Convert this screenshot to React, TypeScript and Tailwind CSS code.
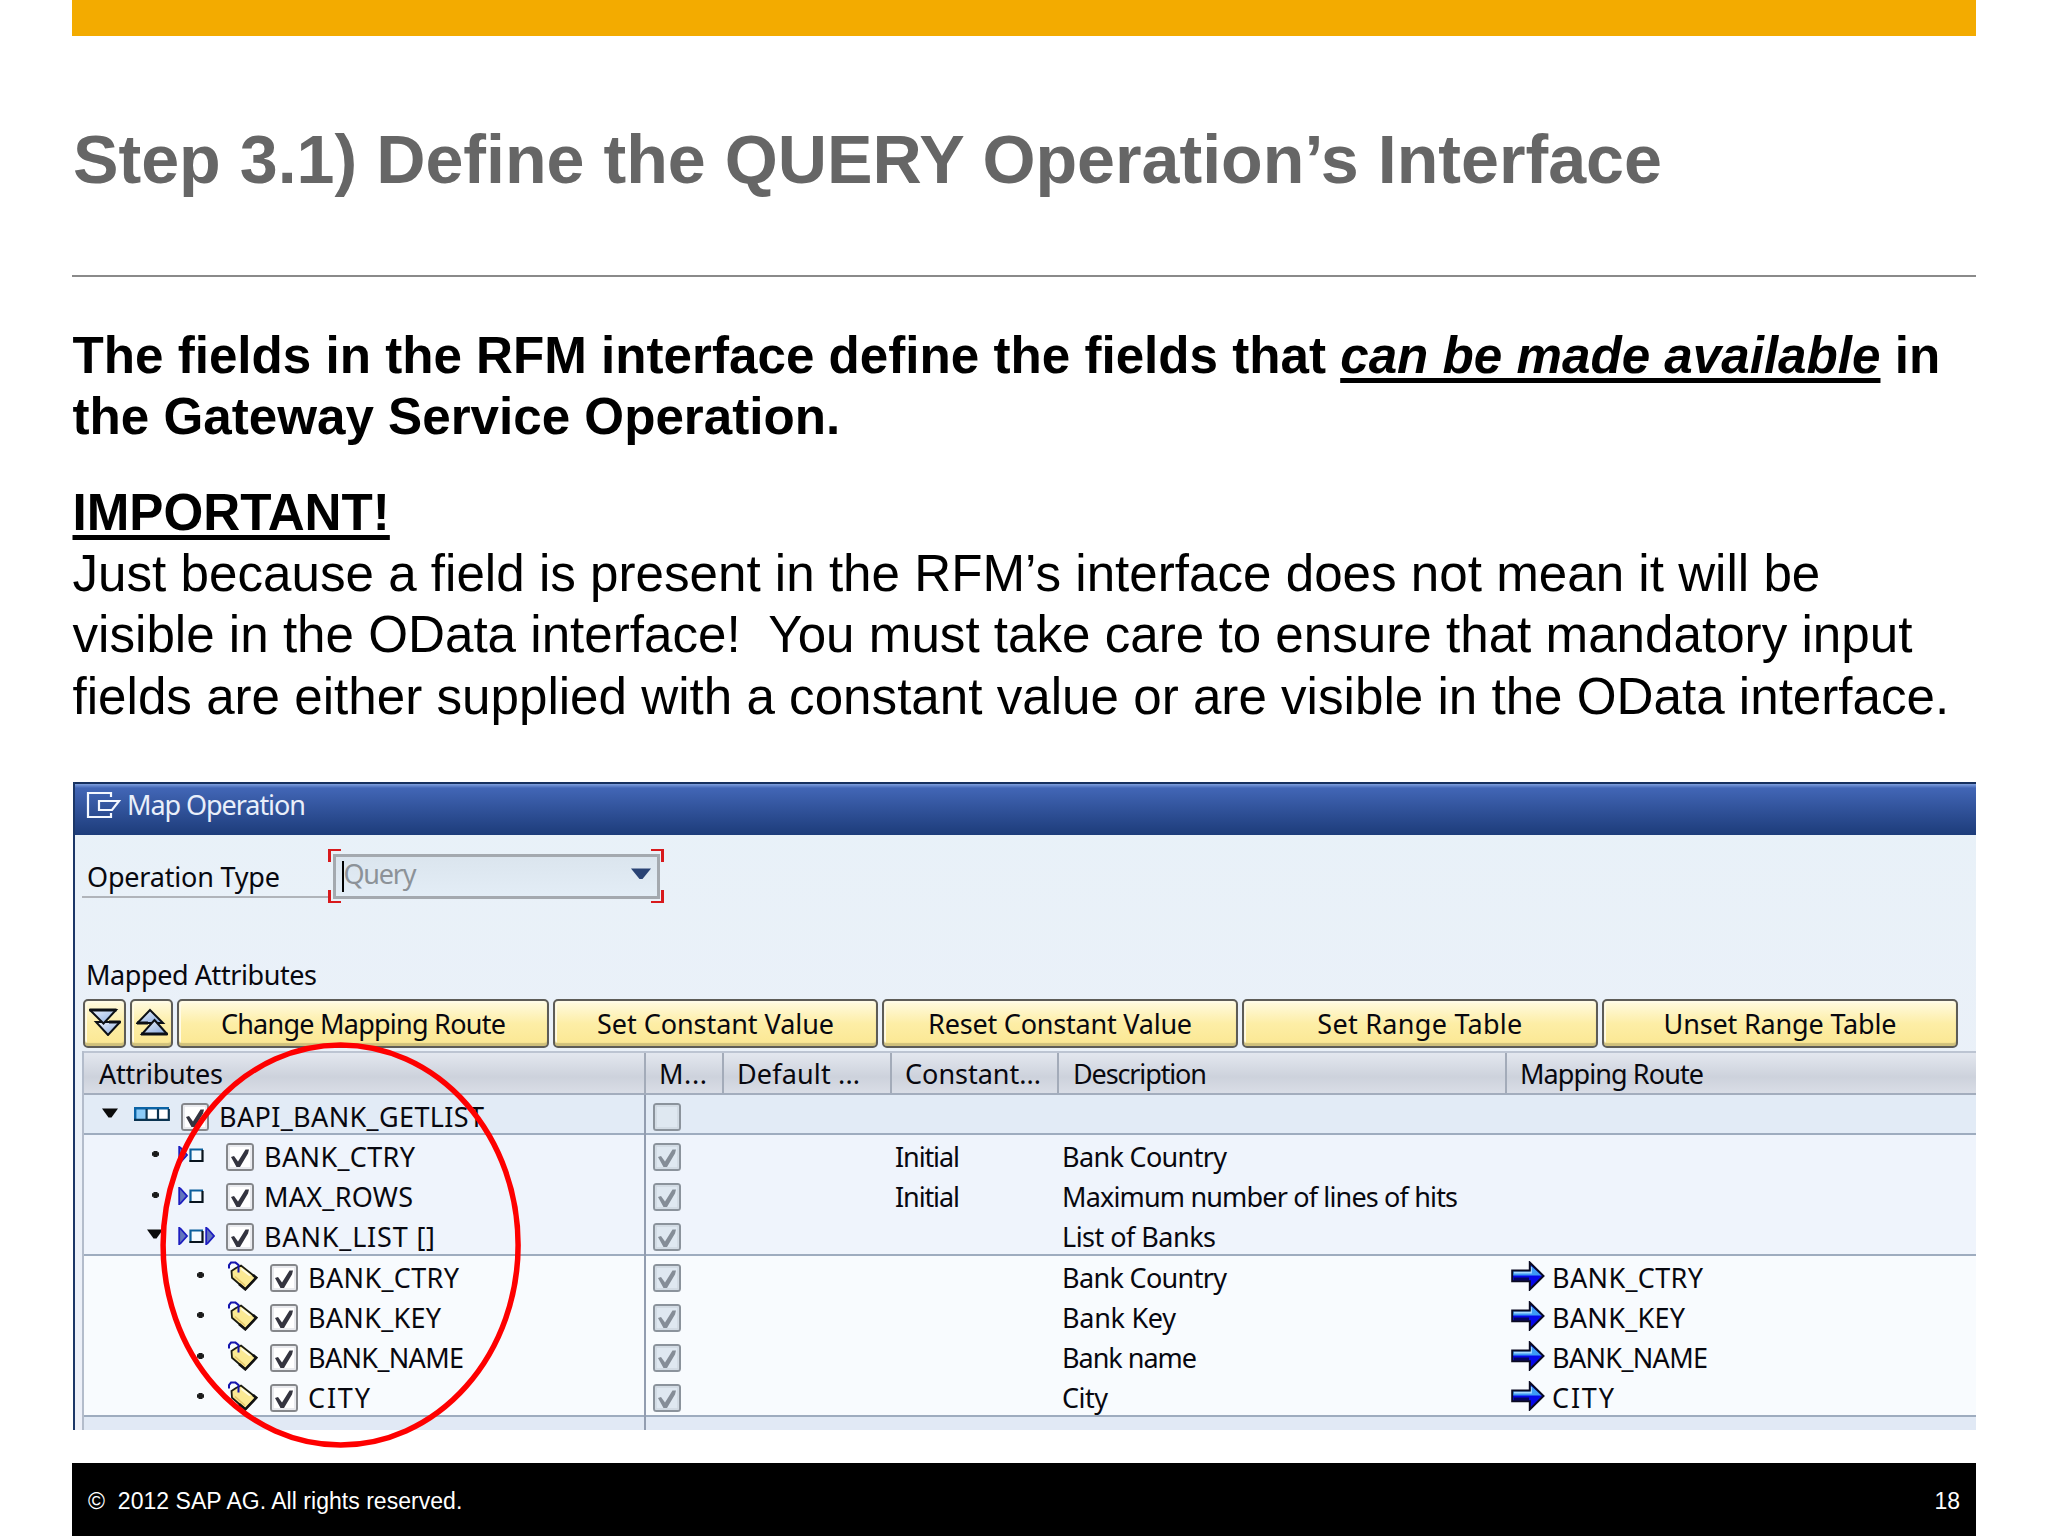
import { useLayoutEffect, useRef, useState } from "react";
import type { ReactNode } from "react";

type NodeKind = "structure" | "input" | "inout" | "field";

type Row = {
  level: 0 | 1 | 2;
  kind: NodeKind;
  open?: boolean;
  name: string;
  nameWidth: number;
  mapped: boolean;
  constant?: string;
  description?: string;
  descriptionWidth?: number;
  route?: boolean;
};

const rows: Row[] = [
  { level: 0, kind: "structure", open: true, name: "BAPI_BANK_GETLIST", nameWidth: 263, mapped: false },
  { level: 1, kind: "input", name: "BANK_CTRY", nameWidth: 149, mapped: true, constant: "Initial", description: "Bank Country", descriptionWidth: 163 },
  { level: 1, kind: "input", name: "MAX_ROWS", nameWidth: 147, mapped: true, constant: "Initial", description: "Maximum number of lines of hits", descriptionWidth: 394 },
  { level: 1, kind: "inout", open: true, name: "BANK_LIST []", nameWidth: 169, mapped: true, description: "List of Banks", descriptionWidth: 152 },
  { level: 2, kind: "field", name: "BANK_CTRY", nameWidth: 149, mapped: true, description: "Bank Country", descriptionWidth: 163, route: true },
  { level: 2, kind: "field", name: "BANK_KEY", nameWidth: 131, mapped: true, description: "Bank Key", descriptionWidth: 112, route: true },
  { level: 2, kind: "field", name: "BANK_NAME", nameWidth: 154, mapped: true, description: "Bank name", descriptionWidth: 133, route: true },
  { level: 2, kind: "field", name: "CITY", nameWidth: 60, mapped: true, description: "City", descriptionWidth: 44, route: true },
];

const buttons = [
  { label: "Change Mapping Route", textWidth: 283, className: "w-[372px]" },
  { label: "Set Constant Value", textWidth: 235, className: "w-[325px]" },
  { label: "Reset Constant Value", textWidth: 262, className: "w-[356px]" },
  { label: "Set Range Table", textWidth: 203, className: "w-[356px]" },
  { label: "Unset Range Table", textWidth: 231, className: "w-[356px]" },
];

const headers = [
  { label: "Attributes", textWidth: 122, className: "pl-[15px]" },
  { label: "M...", textWidth: 46, className: "border-l-2 pl-[13px]" },
  { label: "Default ...", textWidth: 121, className: "border-l-2 pl-[13px]" },
  { label: "Constant...", textWidth: 134, className: "border-l-2 pl-[13px]" },
  { label: "Description", textWidth: 132, className: "border-l-2 pl-[14px]" },
  { label: "Mapping Route", textWidth: 182, className: "border-l-2 pl-[13px]" },
];

const GRID = "grid grid-cols-[560px_78px_168px_167px_448px_471px]";

// Glyph side bearings, left and right of the ink
const BEARING = 2;

// Spreads the letters so that the label's ink fills the given width
function FitText({
  text,
  width,
  className = "",
}: {
  text: string;
  width: number;
  className?: string;
}) {
  const ref = useRef<HTMLSpanElement | null>(null);
  const [spacing, setSpacing] = useState(0);

  useLayoutEffect(() => {
    const node = ref.current;
    if (!node) return;
    node.style.letterSpacing = "0px";
    const natural = node.getBoundingClientRect().width;
    const next = (width + BEARING - natural) / (text.length - 1);
    node.style.letterSpacing = `${next}px`;
    setSpacing(next);
  }, [text, width]);

  return (
    <span
      ref={ref}
      className={`inline-block whitespace-pre ${className}`}
      style={{ letterSpacing: `${spacing}px` }}
    >
      {text}
    </span>
  );
}

function Checkbox({ checked, disabled }: { checked: boolean; disabled?: boolean }) {
  return (
    <svg viewBox="0 0 28 28" className="size-7 shrink-0">
      <rect
        x="1"
        y="1"
        width="26"
        height="26"
        rx="2.5"
        fill={disabled ? "#dfe8f1" : "#ffffff"}
        stroke={disabled ? "#8b939c" : "#85878b"}
        strokeWidth="2"
      />
      <rect x="3" y="3" width="22" height="22" fill="none" stroke={disabled ? "#cfd8e1" : "#e3e5ea"} strokeWidth="1.5" />
      {checked && (
        <path
          d="M5 14 L8 13 L12 18.5 L19.5 6.5 L23 6.5 L22 10.5 L14 24 L10.5 24 Z"
          fill={disabled ? "#858d97" : "#34343f"}
        />
      )}
    </svg>
  );
}

function NodeIcon({ kind }: { kind: NodeKind }) {
  if (kind === "structure") {
    return (
      <svg viewBox="0 0 36 14" className="mr-[11px] mb-[6px] ml-4 h-3.5 w-9 shrink-0">
        <rect x="1.2" y="1.2" width="11.6" height="11.6" fill="#8ccbf7" />
        <rect x="12.5" y="1.2" width="22" height="11.6" fill="#fff" />
        <path d="M1.2 13 V1.2 H35" fill="none" stroke="#0b63a5" strokeWidth="2.4" />
        <path d="M0 12.8 H34.8 V2 M12.6 2 V12 M24 2 V12" fill="none" stroke="#0a3350" strokeWidth="2.2" />
      </svg>
    );
  }
  if (kind === "field") {
    return (
      <svg viewBox="0 0 30 30" className="mr-3 mb-1 ml-5 size-[30px] shrink-0">
        <path d="M3.5 10 L8 7 L13 4.5 L28.3 16.7 L17.3 28.3 L4 16.7 Z" fill="#fbe993" stroke="#1a1a10" strokeWidth="1.8" />
        <path d="M13 7.5 L22 14.5" fill="none" stroke="#fffbe0" strokeWidth="2" />
        <path d="M7 15.5 L17 24.5" fill="none" stroke="#e6c66c" strokeWidth="1.6" />
        <path d="M11 23 L17.3 28.3 L28.3 16.7 L25 14" fill="none" stroke="#111" strokeWidth="2.6" />
        <path d="M1 7.5 V4 L3 1.6 H7.5 L10.5 4 V11.5" fill="none" stroke="#1414ae" strokeWidth="2" />
      </svg>
    );
  }
  return (
    <svg viewBox="0 0 37 20" className="mr-[11px] mb-[3px] ml-[15px] h-5 w-[37px] shrink-0">
      <path d="M1 1 L9.5 10 L1 19 Z" fill="#6375bd" />
      <path d="M1.2 1 V19 M2 2 L9 10 L2 18" fill="none" stroke="#1d1dc0" strokeWidth="1.8" />
      <rect x="12.5" y="4.5" width="12" height="11.5" fill="#f4faff" />
      <path d="M12.5 17 V4.5 H25" fill="none" stroke="#0b5f9c" strokeWidth="2.2" />
      <path d="M11.5 16 H24.5 V5" fill="none" stroke="#08131d" strokeWidth="2.2" />
      {kind === "inout" && (
        <>
          <path d="M28 1 L36.5 10 L28 19 Z" fill="#6375bd" />
          <path d="M28.2 1 V19 M29 2 L36 10 L29 18" fill="none" stroke="#1d1dc0" strokeWidth="1.8" />
        </>
      )}
    </svg>
  );
}

function Marker({ open }: { open?: boolean }) {
  return (
    <svg viewBox="0 0 16 16" className="mb-[5px] size-4 shrink-0">
      {open ? (
        <path d="M0 2.5 H16 L9.5 11.5 H6.5 Z" fill="#0b0b0b" />
      ) : (
        <path d="M6.5 5 H10.5 V6.3 H12 V9.7 H10.5 V11 H6.5 V9.7 H5 V6.3 H6.5 Z" fill="#1b1b1b" />
      )}
    </svg>
  );
}

function RouteArrow() {
  return (
    <svg viewBox="0 0 34 30" className="mb-1 h-[30px] w-[34px] shrink-0">
      <path d="M1.5 9.5 H18.5 V2 L32 15 L18.5 28 V20 H1.5 Z" fill="#0606e8" />
      <path d="M2 10 H19 V4 L31 14.5 H2 Z" fill="#3d9af5" />
      <path d="M3 11.5 H20 V6" fill="none" stroke="#a6d8ff" strokeWidth="1.8" />
      <path d="M3 18 H18" stroke="#050560" strokeWidth="3" />
      <path d="M1.2 9.5 H18.8 V1.5 L32.5 15 L18.8 28.5 V20.2 H1.2 Z" fill="none" stroke="#0a0a22" strokeWidth="2" />
    </svg>
  );
}

function ToolButton({ children, className }: { children: ReactNode; className: string }) {
  return (
    <button
      className={`flex h-[49px] shrink-0 items-center justify-center rounded-[5px] border-2 border-[#5d5c57] bg-linear-to-b from-[#fffae0] via-[#fdeea6] via-50% to-[#fbe792] shadow-[inset_0_-3px_1px_#cfc07c,inset_2px_2px_0_#fffbe6] ${className}`}
    >
      {children}
    </button>
  );
}

function DoubleTriangle({ up }: { up?: boolean }) {
  return (
    <svg viewBox="0 0 32 28" className="mb-1 h-7 w-8">
      <defs>
        <linearGradient id={up ? "triUp" : "triDown"} x1="0" y1="0" x2="1" y2="1">
          <stop offset="0" stopColor="#eef4ff" />
          <stop offset="1" stopColor="#86a8dc" />
        </linearGradient>
      </defs>
      {up ? (
        <g fill="url(#triUp)" stroke="#0c1016" strokeWidth="2">
          <path d="M14 2 L27 15 H1.5 Z" />
          <path d="M18.5 12 L31 26 H6 Z" />
          <path d="M5 26 H31.5 M1 15 H12" strokeWidth="3" />
        </g>
      ) : (
        <g fill="url(#triDown)" stroke="#0c1016" strokeWidth="2">
          <path d="M7 14 H31 L19 27 Z" />
          <path d="M1 2 H27 L14.5 15.5 Z" />
          <path d="M0.5 2 H27.5 M20 14 H31.5" strokeWidth="3" />
        </g>
      )}
    </svg>
  );
}

const indent = ["pl-[18px]", "pl-[63px]", "pl-[108px]"];
const rowTone = ["bg-[#e2ebf6]", "bg-[#eff4fc]", "bg-[#f8fbfe]"];

function TableRow({ row, ruled }: { row: Row; ruled: boolean }) {
  return (
    <div
      className={`${GRID} h-[40.25px] ${rowTone[row.level]} ${
        ruled ? "shadow-[inset_0_-2px_0_#9eacbf]" : ""
      }`}
    >
      <div className={`flex items-center pt-[3px] ${indent[row.level]}`}>
        <Marker open={row.open} />
        <NodeIcon kind={row.kind} />
        <Checkbox checked />
        <FitText text={row.name} width={row.nameWidth} className="ml-2.5" />
      </div>
      <div className="flex items-center border-l-2 border-[#929db0] pt-[3px] pl-[7px]">
        <Checkbox checked={row.mapped} disabled />
      </div>
      <div />
      <div className="flex items-center pt-[3px] pl-[5px]">
        {row.constant && <FitText text={row.constant} width={63} />}
      </div>
      <div className="flex items-center pt-[3px] pl-[5px]">
        {row.description && (
          <FitText text={row.description} width={row.descriptionWidth ?? 0} />
        )}
      </div>
      <div className="flex items-center pt-[3px] pl-[6px]">
        {row.route && (
          <>
            <RouteArrow />
            <FitText text={row.name} width={row.nameWidth} className="ml-[7px]" />
          </>
        )}
      </div>
    </div>
  );
}

function MapOperation() {
  return (
    <section className="ml-px flex h-[648px] w-[1903px] flex-col overflow-hidden border-l-2 border-[#1c3768] bg-linear-to-b from-[#e8f1f8] to-[#edf0f9] font-['Noto_Sans','Open_Sans',sans-serif] text-[27px] leading-[38px] text-[#08080f]">
      <header className="flex h-[53px] shrink-0 items-center border-t-2 border-[#16305f] bg-linear-to-b from-[#7f9fdd] via-[#4266b6] via-8% to-[#1d3c7a] pb-2.5 pl-[11px] text-[#e9effa]">
        <svg viewBox="0 0 36 28" className="h-7 w-9" fill="none" stroke="#f4f8ff" strokeWidth="2.2">
          <path d="M25 6 V2 H2 V26 H25 V22" />
          <path d="M13 10 H33 L26 19 H13 Z" />
        </svg>
        <FitText text="Map Operation" width={177} className="ml-[5px]" />
      </header>

      <div className="flex h-[68px] shrink-0 items-end pl-[7px]">
        <div className="mb-[5px] h-[46px] w-[246px] shrink-0 border-b-2 border-[#b0b4ba]">
          <FitText text="Operation Type" width={191} className="mt-[6px] ml-[5px]" />
        </div>
        <div className="relative flex h-[54px] w-[336px] shrink-0 items-center justify-center">
          <div className="flex h-[45px] w-[327px] items-center border-[3px] border-[#a4a9af] bg-linear-to-b from-[#dbe5ee] to-[#e3edf6] pl-[6px]">
            <div className="h-[31px] w-[2px] shrink-0 bg-black" />
            <FitText text="Query" width={71} className="-mt-1 text-[#8c9298]" />
            <svg viewBox="0 0 20 12" className="mr-1.5 mb-1 ml-auto h-3 w-5">
              <path d="M0 0.5 H20 L11.5 11 H8.5 Z" fill="#2a4374" />
            </svg>
          </div>
          {/* Focus corners */}
          <span className="absolute top-0 left-0 size-[13px] border-t-2 border-l-[3px] border-[#d8191c]" />
          <span className="absolute top-0 right-0 size-[13px] border-t-2 border-r-[3px] border-[#d8191c]" />
          <span className="absolute bottom-0 left-0 size-[13px] border-b-2 border-l-[3px] border-[#d8191c]" />
          <span className="absolute right-0 bottom-0 size-[13px] border-r-[3px] border-b-2 border-[#d8191c]" />
        </div>
      </div>

      <div className="flex h-[96px] shrink-0 items-end pb-[5px] pl-[11px]">
        <FitText text="Mapped Attributes" width={229} />
      </div>

      <div className="flex h-[52px] shrink-0 gap-1 pl-2">
        <ToolButton className="w-[43px]">
          <DoubleTriangle />
        </ToolButton>
        <ToolButton className="w-[43px]">
          <DoubleTriangle up />
        </ToolButton>
        {buttons.map((button) => (
          <ToolButton key={button.label} className={button.className}>
            <FitText text={button.label} width={button.textWidth} />
          </ToolButton>
        ))}
      </div>

      <div className="ml-[7px] flex flex-1 flex-col border-l-2 border-[#b3bccb]">
        <div
          className={`${GRID} h-[43.5px] shrink-0 border-t-2 border-b-2 border-t-[#bcc4d2] border-b-[#a3adbd] bg-linear-to-b from-[#e3e7ef] via-[#cdd2dc] via-60% to-[#d9dde6]`}
        >
          {headers.map((header) => (
            <div
              key={header.label}
              className={`flex items-center border-[#a3abb9] pt-0.5 ${header.className}`}
            >
              <FitText text={header.label} width={header.textWidth} />
            </div>
          ))}
        </div>
        {rows.map((row, i) => (
          <TableRow key={i} row={row} ruled={i === 0 || i === 3 || i === 7} />
        ))}
        <div className={`${GRID} flex-1 bg-[#e1e9f5]`}>
          <div />
          <div className="border-l-2 border-[#929db0]" />
        </div>
      </div>
    </section>
  );
}

export default function App() {
  return (
    <main className="relative h-[1536px] w-[2048px] overflow-hidden bg-white font-['Liberation_Sans',Arial,sans-serif]">
      <div className="ml-[72px] flex h-full w-[1904px] flex-col">
        <div className="h-9 shrink-0 bg-[#f3ab00]" />

        <h1 className="h-[239px] shrink-0 pt-[82px] pl-px text-[68.2px] leading-[82px] font-bold whitespace-nowrap text-[#666666]">
          Step 3.1) Define the QUERY Operation’s Interface
        </h1>
        <div className="h-[2px] shrink-0 bg-[#8a8a8a]" />

        <div className="h-[505px] w-[1920px] shrink-0 pt-[48px] pl-[0.5px] text-[51.17px] leading-[61.35px] whitespace-pre text-black">
          <p className="font-bold">
            The fields in the RFM interface define the fields that{" "}
            <em className="underline decoration-[5px] underline-offset-[5px] [text-decoration-skip-ink:none]">
              can be made available
            </em>{" "}
            in
            <br />
            the Gateway Service Operation.
          </p>
          <p className="mt-[34px]">
            <strong className="underline decoration-[5px] underline-offset-[5px] [text-decoration-skip-ink:none]">
              IMPORTANT!
            </strong>
            <br />
            Just because a field is present in the RFM’s interface does not mean it will be
            <br />
            visible in the OData interface!{"  "}You must take care to ensure that mandatory input
            <br />
            fields are either supplied with a constant value or are visible in the OData interface.
          </p>
        </div>

        <MapOperation />

        <footer className="mt-[33px] flex flex-1 items-center justify-between bg-black pt-[3px] pr-[16px] pl-[16px] text-[23px] whitespace-pre text-white">
          <span className="tracking-[0.03px]">©{"  "}2012 SAP AG. All rights reserved.</span>
          <span>18</span>
        </footer>
      </div>

      {/* Highlight around the attribute tree */}
      <svg
        viewBox="0 0 362 408"
        className="absolute top-[1041px] left-[160px] h-[408px] w-[362px]"
        fill="none"
      >
        <ellipse cx="180.6" cy="204" rx="177.5" ry="200" stroke="#fe0000" strokeWidth="5.5" />
      </svg>
    </main>
  );
}
